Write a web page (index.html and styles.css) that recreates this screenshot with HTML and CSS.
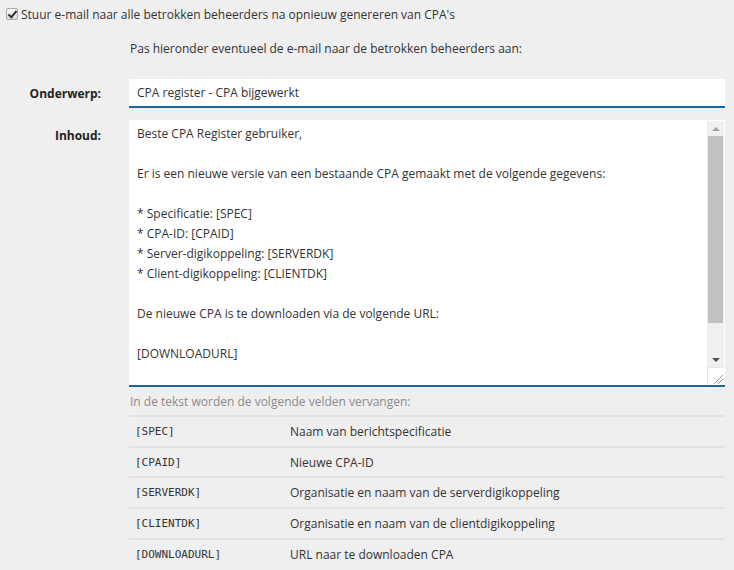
FILE: index.html
```html
<!DOCTYPE html>
<html lang="nl">
<head>
<meta charset="utf-8">
<title>CPA e-mail</title>
<link rel="stylesheet" href="styles.css">
</head>
<body>
<div class="page">
  <label class="check-row">
    <input type="checkbox" class="check" checked>
    <span>Stuur e-mail naar alle betrokken beheerders na opnieuw genereren van CPA's</span>
  </label>
  <p class="intro">Pas hieronder eventueel de e-mail naar de betrokken beheerders aan:</p>

  <div class="form-row subject-row">
    <div class="label">Onderwerp:</div>
    <div class="input">CPA register - CPA bijgewerkt</div>
  </div>

  <div class="form-row body-row">
    <div class="label">Inhoud:</div>
    <div class="textarea">
      <div class="ta-content">
        <p>Beste CPA Register gebruiker,</p>
        <p>&nbsp;</p>
        <p>Er is een nieuwe versie van een bestaande CPA gemaakt met de volgende gegevens:</p>
        <p>&nbsp;</p>
        <p>* Specificatie: [SPEC]</p>
        <p>* CPA-ID: [CPAID]</p>
        <p>* Server-digikoppeling: [SERVERDK]</p>
        <p>* Client-digikoppeling: [CLIENTDK]</p>
        <p>&nbsp;</p>
        <p>De nieuwe CPA is te downloaden via de volgende URL:</p>
        <p>&nbsp;</p>
        <p>[DOWNLOADURL]</p>
      </div>
      <div class="scrollbar">
        <div class="sb-btn"><span class="tri-up"></span></div>
        <div class="sb-track"><div class="sb-thumb"></div></div>
        <div class="sb-btn"><span class="tri-down"></span></div>
        <div class="sb-resize">
          <svg width="14" height="14" viewBox="0 0 14 14"><path d="M4 13 L13 4 M8 13 L13 8" stroke="#999" stroke-width="1" fill="none"/></svg>
        </div>
      </div>
    </div>
  </div>

  <div class="fields">
    <p class="hint">In de tekst worden de volgende velden vervangen:</p>
    <div class="table">
      <div class="row"><span class="code">[SPEC]</span><span class="desc">Naam van berichtspecificatie</span></div>
      <div class="row"><span class="code">[CPAID]</span><span class="desc">Nieuwe CPA-ID</span></div>
      <div class="row"><span class="code">[SERVERDK]</span><span class="desc">Organisatie en naam van de serverdigikoppeling</span></div>
      <div class="row"><span class="code">[CLIENTDK]</span><span class="desc">Organisatie en naam van de clientdigikoppeling</span></div>
      <div class="row"><span class="code">[DOWNLOADURL]</span><span class="desc">URL naar te downloaden CPA</span></div>
    </div>
  </div>
</div>
</body>
</html>
```

FILE: styles.css
```css
* { box-sizing: border-box; }
html, body {
  margin: 0;
  background: #efefef;
  height: 100%;
  overflow: hidden;
}
body {
  font-family: "Open Sans", "Noto Sans", sans-serif;
  font-size: 12px;
  color: #333;
}
p { margin: 0; }
.page {
  padding: 6px 9px 0 0;
}
.check-row {
  display: flex;
  align-items: center;
  gap: 3px;
  padding-left: 6px;
  height: 16px;
}
.check {
  appearance: none;
  -webkit-appearance: none;
  margin: 0;
  width: 12px;
  height: 12px;
  border: 1px solid #a9a9a9;
  border-radius: 2px;
  background: linear-gradient(#fdfdfd, #dcdcdc);
  position: relative;
}
.check:checked::after {
  content: "";
  position: absolute;
  left: 3px;
  top: 0px;
  width: 3px;
  height: 7px;
  border: solid #333;
  border-width: 0 2px 2px 0;
  transform: rotate(40deg);
}
.intro {
  margin: 19px 0 0 130px;
  line-height: 16px;
}
.form-row {
  display: grid;
  grid-template-columns: 101px 1fr;
  column-gap: 28px;
}
.label {
  text-align: right;
  font-weight: bold;
  color: #222;
}
.subject-row {
  margin-top: 22px;
}
.subject-row .label {
  line-height: 30px;
}
.input {
  height: 29px;
  background: #fff;
  border-bottom: 2px solid #1a679b;
  padding: 0 8px;
  line-height: 28px;
  font-size: 12px;
}
.body-row {
  margin-top: 11px;
}
.body-row .label {
  padding-top: 6px;
  line-height: 20px;
}
.textarea {
  height: 267px;
  background: #fff;
  border-bottom: 2px solid #1a679b;
  display: flex;
  overflow: hidden;
}
.ta-content {
  flex: 1;
  padding: 4px 8px;
  line-height: 20px;
  white-space: nowrap;
}
.scrollbar {
  width: 17px;
  margin: 1px 1px 0 0;
  display: flex;
  flex-direction: column;
  background: #f0f0f0;
}
.sb-btn {
  height: 15px;
  display: flex;
  align-items: center;
  justify-content: center;
}
.tri-up, .tri-down {
  width: 0;
  height: 0;
  border-left: 4px solid transparent;
  border-right: 4px solid transparent;
}
.tri-up { border-bottom: 4px solid #a3a3a3; }
.tri-down { border-top: 4px solid #505050; }
.sb-track {
  flex: 1;
  padding: 0 1px;
}
.sb-thumb {
  height: 187px;
  background: #c1c1c1;
}
.sb-resize {
  height: 18px;
  background: #fff;
  border-left: 1px solid #e6e6e6;
  border-top: 1px solid #e6e6e6;
  display: flex;
  align-items: flex-end;
  justify-content: flex-end;
}
.sb-resize svg { display: block; }
.fields {
  margin-left: 129px;
}
.hint {
  color: #8a8a8a;
  margin-top: 6px;
  padding-left: 1px;
  line-height: 18px;
}
.table {
  margin-top: 4px;
}
.row {
  display: flex;
  align-items: center;
  border-top: 2px solid #e2e2e2;
  height: 30.7px;
}
.code {
  width: 161px;
  padding-left: 6px;
  font-family: "DejaVu Sans Mono", "Liberation Mono", monospace;
  font-size: 11px;
  color: #333;
}
.desc {
  flex: 1;
}
```
